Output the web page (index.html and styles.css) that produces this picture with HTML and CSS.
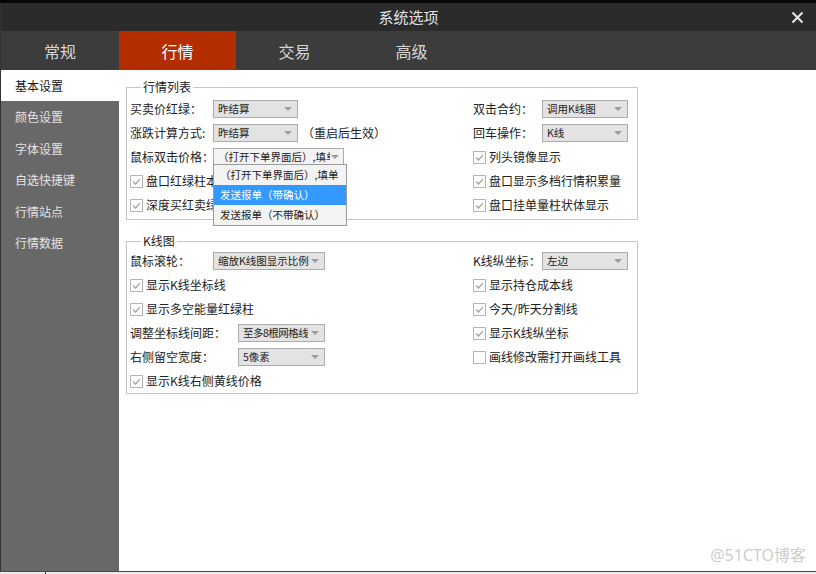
FILE: index.html
```html
<!DOCTYPE html>
<html lang="zh-CN">
<head>
<meta charset="utf-8">
<title>系统选项</title>
<link rel="stylesheet" href="styles.css">
</head>
<body>
<div class="topstrip"></div>
<div class="dialog">
  <div class="titlebar">
    <span></span>
    <span class="title">系统选项</span>
    <span class="close"><svg width="13" height="13" viewBox="0 0 13 13"><path d="M1.5 1.5 L11.5 11.5 M11.5 1.5 L1.5 11.5" stroke="#e6e6e6" stroke-width="2" fill="none"/></svg></span>
  </div>
  <div class="tabs">
    <div class="tab">常规</div>
    <div class="tab active">行情</div>
    <div class="tab">交易</div>
    <div class="tab">高级</div>
  </div>
  <div class="body">
    <nav class="sidebar">
      <div class="side-item active">基本设置</div>
      <div class="side-item">颜色设置</div>
      <div class="side-item">字体设置</div>
      <div class="side-item">自选快捷键</div>
      <div class="side-item">行情站点</div>
      <div class="side-item">行情数据</div>
    </nav>
    <main class="main">
      <fieldset class="group g1">
        <legend>行情列表</legend>
        <div class="row"><span class="lbl">买卖价红绿：</span><div class="sel w85"><span class="txt">昨结算</span><i class="arrow"></i></div></div>
        <div class="row"><span class="lbl lr">双击合约：</span><div class="sel w86"><span class="txt">调用K线图</span><i class="arrow"></i></div></div>

        <div class="row"><span class="lbl">涨跌计算方式:</span><div class="sel w85"><span class="txt">昨结算</span><i class="arrow"></i></div><span class="note">（重启后生效）</span></div>
        <div class="row"><span class="lbl lr">回车操作：</span><div class="sel w86"><span class="txt">K线</span><i class="arrow"></i></div></div>

        <div class="row"><span class="lbl">鼠标双击价格：</span>
          <div class="sel w131 open"><span class="txt">（打开下单界面后）,填单</span><i class="arrow"></i>
            <div class="dropdown">
              <div class="opt">（打开下单界面后）,填单</div>
              <div class="opt hl">发送报单（带确认）</div>
              <div class="opt">发送报单（不带确认）</div>
            </div>
          </div>
        </div>
        <label class="chk"><svg class="box" width="13" height="13" viewBox="0 0 13 13"><rect x="0.5" y="0.5" width="12" height="12" fill="#fff" stroke="#b3b3b3"/><path d="M3 6.5 L5.5 9 L10 3.8" stroke="#a3a3a3" stroke-width="1.2" fill="none"/></svg><span>列头镜像显示</span></label>

        <label class="chk"><svg class="box" width="13" height="13" viewBox="0 0 13 13"><rect x="0.5" y="0.5" width="12" height="12" fill="#fff" stroke="#b3b3b3"/><path d="M3 6.5 L5.5 9 L10 3.8" stroke="#a3a3a3" stroke-width="1.2" fill="none"/></svg><span>盘口红绿柱本显示</span></label>
        <label class="chk"><svg class="box" width="13" height="13" viewBox="0 0 13 13"><rect x="0.5" y="0.5" width="12" height="12" fill="#fff" stroke="#b3b3b3"/><path d="M3 6.5 L5.5 9 L10 3.8" stroke="#a3a3a3" stroke-width="1.2" fill="none"/></svg><span>盘口显示多档行情积累量</span></label>

        <label class="chk"><svg class="box" width="13" height="13" viewBox="0 0 13 13"><rect x="0.5" y="0.5" width="12" height="12" fill="#fff" stroke="#b3b3b3"/><path d="M3 6.5 L5.5 9 L10 3.8" stroke="#a3a3a3" stroke-width="1.2" fill="none"/></svg><span>深度买红卖绿显示</span></label>
        <label class="chk"><svg class="box" width="13" height="13" viewBox="0 0 13 13"><rect x="0.5" y="0.5" width="12" height="12" fill="#fff" stroke="#b3b3b3"/><path d="M3 6.5 L5.5 9 L10 3.8" stroke="#a3a3a3" stroke-width="1.2" fill="none"/></svg><span>盘口挂单量柱状体显示</span></label>
      </fieldset>

      <fieldset class="group g2">
        <legend>K线图</legend>
        <div class="row"><span class="lbl">鼠标滚轮：</span><div class="sel w112"><span class="txt">缩放K线图显示比例</span><i class="arrow"></i></div></div>
        <div class="row"><span class="lbl lr">K线纵坐标：</span><div class="sel w86"><span class="txt">左边</span><i class="arrow"></i></div></div>

        <label class="chk"><svg class="box" width="13" height="13" viewBox="0 0 13 13"><rect x="0.5" y="0.5" width="12" height="12" fill="#fff" stroke="#b3b3b3"/><path d="M3 6.5 L5.5 9 L10 3.8" stroke="#a3a3a3" stroke-width="1.2" fill="none"/></svg><span>显示K线坐标线</span></label>
        <label class="chk"><svg class="box" width="13" height="13" viewBox="0 0 13 13"><rect x="0.5" y="0.5" width="12" height="12" fill="#fff" stroke="#b3b3b3"/><path d="M3 6.5 L5.5 9 L10 3.8" stroke="#a3a3a3" stroke-width="1.2" fill="none"/></svg><span>显示持仓成本线</span></label>

        <label class="chk"><svg class="box" width="13" height="13" viewBox="0 0 13 13"><rect x="0.5" y="0.5" width="12" height="12" fill="#fff" stroke="#b3b3b3"/><path d="M3 6.5 L5.5 9 L10 3.8" stroke="#a3a3a3" stroke-width="1.2" fill="none"/></svg><span>显示多空能量红绿柱</span></label>
        <label class="chk"><svg class="box" width="13" height="13" viewBox="0 0 13 13"><rect x="0.5" y="0.5" width="12" height="12" fill="#fff" stroke="#b3b3b3"/><path d="M3 6.5 L5.5 9 L10 3.8" stroke="#a3a3a3" stroke-width="1.2" fill="none"/></svg><span>今天/昨天分割线</span></label>

        <div class="row"><span class="lbl w108">调整坐标线间距：</span><div class="sel w87"><span class="txt tight">至多8根网格线</span><i class="arrow"></i></div></div>
        <label class="chk"><svg class="box" width="13" height="13" viewBox="0 0 13 13"><rect x="0.5" y="0.5" width="12" height="12" fill="#fff" stroke="#b3b3b3"/><path d="M3 6.5 L5.5 9 L10 3.8" stroke="#a3a3a3" stroke-width="1.2" fill="none"/></svg><span>显示K线纵坐标</span></label>

        <div class="row"><span class="lbl w108">右侧留空宽度：</span><div class="sel w87"><span class="txt">5像素</span><i class="arrow"></i></div></div>
        <label class="chk"><svg class="box" width="13" height="13" viewBox="0 0 13 13"><rect x="0.5" y="0.5" width="12" height="12" fill="#fff" stroke="#b3b3b3"/></svg><span>画线修改需打开画线工具</span></label>

        <label class="chk"><svg class="box" width="13" height="13" viewBox="0 0 13 13"><rect x="0.5" y="0.5" width="12" height="12" fill="#fff" stroke="#b3b3b3"/><path d="M3 6.5 L5.5 9 L10 3.8" stroke="#a3a3a3" stroke-width="1.2" fill="none"/></svg><span>显示K线右侧黄线价格</span></label>
        <span></span>
      </fieldset>
    </main>
  </div>
</div>
<div class="bottomstrip"><span class="tick"></span></div>
<div class="watermark">@51CTO博客</div>
</body>
</html>
```

FILE: styles.css
```css
* { box-sizing: border-box; }
html, body { margin: 0; padding: 0; }
body {
  width: 816px;
  height: 574px;
  overflow: hidden;
  position: relative;
  background: #ececec;
  font-family: "Noto Sans CJK SC", "Noto Sans", sans-serif;
  color: #222;
}
.topstrip { height: 3px; background: #050505; }
.dialog {
  height: 569px;
  border-left: 1px solid #333;
  border-bottom: 1px solid #4a4a4a;
  display: flex;
  flex-direction: column;
}
.titlebar {
  height: 28px;
  flex: none;
  background: #2b2b2b;
  display: grid;
  grid-template-columns: 1fr auto 1fr;
  align-items: center;
}
.title { color: #e2e2e2; font-size: 15px; line-height: 20px; }
.close { justify-self: end; margin-right: 12px; display: flex; }
.tabs { height: 39px; flex: none; background: #3c3c3c; display: flex; }
.tab {
  width: 117px;
  display: flex;
  align-items: center;
  justify-content: center;
  color: #d6d6d6;
  font-size: 16px;
}
.tab:first-child { width: 118px; }
.tab.active { background: #b42d00; color: #fff; }
.body { flex: 1; display: flex; min-height: 0; }
.sidebar { width: 118px; flex: none; background: #686868; }
.side-item {
  height: 31.4px;
  line-height: 31.4px;
  padding-left: 14px;
  font-size: 12px;
  color: #e4e4e4;
}
.side-item.active { background: #fff; color: #151515; }
.main { flex: 1; background: #fff; padding: 9px 0 0 7px; }
.group {
  width: 512px;
  margin: 0;
  padding: 0 0 0 3px;
  border: 1px solid #c6c6c6;
  display: grid;
  grid-template-columns: 343px 1fr;
  grid-auto-rows: 24px;
  align-items: center;
  font-size: 12px;
}
.group legend {
  margin-left: 11px;
  padding: 0 2px;
  font-size: 12px;
  line-height: 16px;
  color: #222;
}
.g1 { padding-top: 2px; padding-bottom: 2px; }
.g2 { margin-top: 13px; padding-top: 0; padding-bottom: 0; }
.row { display: flex; align-items: center; line-height: 16px; }
.lbl { width: 83px; flex: none; white-space: nowrap; }
.lbl.lr { width: 69px; }
.lbl.w108 { width: 108px; }
.note { margin-left: 4px; white-space: nowrap; }
.sel {
  height: 18px;
  border: 1px solid #acacac;
  background: #e3e3e3;
  display: flex;
  align-items: center;
  justify-content: space-between;
  padding: 0 5px 0 4px;
  font-size: 10.5px;
  line-height: 16px;
  position: relative;
  flex: none;
}
.sel .txt { overflow: hidden; white-space: nowrap; }
.sel .txt.tight { letter-spacing: -0.5px; }
.sel.open { background: #f3f3f3; padding-right: 4px; }
.w85 { width: 85px; }
.w86 { width: 86px; }
.w87 { width: 87px; }
.w112 { width: 112px; }
.w131 { width: 131px; }
.arrow {
  width: 0;
  height: 0;
  flex: none;
  border-left: 4px solid transparent;
  border-right: 4px solid transparent;
  border-top: 4px solid #9c9c9c;
  margin-left: 1px;
}
.dropdown {
  position: absolute;
  left: -1px;
  top: 15px;
  width: 134px;
  background: #f3f3f3;
  border: 1px solid #9a9a9a;
  z-index: 5;
}
.opt {
  height: 20px;
  line-height: 20px;
  padding-left: 6px;
  white-space: nowrap;
  overflow: hidden;
  font-size: 10.5px;
  color: #222;
}
.opt.hl { background: #3399ff; color: #fff; }
.chk {
  display: flex;
  align-items: center;
  gap: 3px;
  line-height: 16px;
  white-space: nowrap;
}
.box { flex: none; }
.bottomstrip { height: 2px; background: #ececec; display: flex; }
.tick { width: 1px; height: 2px; margin-left: 45px; background: #333; }
.watermark {
  position: absolute;
  right: 10px;
  bottom: 9px;
  font-family: "Noto Sans", "Noto Sans CJK SC", sans-serif;
  font-size: 16px;
  line-height: 20px;
  color: #cdcdcd;
}
```
